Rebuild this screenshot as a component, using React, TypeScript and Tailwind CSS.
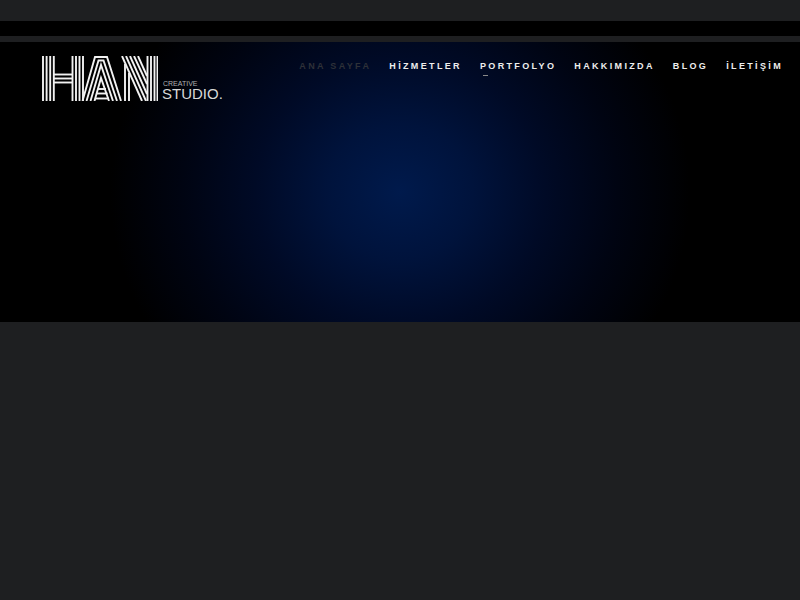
const navItems = [
  { label: "ANA SAYFA", active: true },
  { label: "HİZMETLER" },
  { label: "PORTFOLYO", marker: true },
  { label: "HAKKIMIZDA" },
  { label: "BLOG" },
  { label: "İLETİŞİM" },
];

function HanLogo() {
  const lines = [
    // H left stem
    "M1 0V45", "M4.6 0V45", "M8.2 0V45", "M11.8 0V45",
    // H bar
    "M12 18.5H31", "M12 22.5H31", "M12 26.5H31",
    // H right stem
    "M30.5 0V45", "M34 0V45", "M37.5 0V45", "M41 0V45",
    // A chevrons
    "M40.5 45L53 1H65L79 45",
    "M44.5 45L56.5 4.5H61.5L75 45",
    "M48.5 45L59 9L71 45",
    "M52.5 45L59 22L67 45",
    // A bar
    "M56 33H64", "M54.5 37.5H65.5", "M53 42.5H67",
    // N left stem
    "M83 8V45", "M87 17V45",
    // N diagonals
    "M80 0L100 45", "M84 0L104 45", "M88 0L105 38", "M92 0L105 28", "M96 0L105 20",
    // N right stem
    "M105.5 0V45", "M109 0V45", "M112.5 0V45", "M115.5 0V45",
  ];
  return (
    <svg width="116" height="45" viewBox="0 0 116 45" fill="none" stroke="#f2f2f2" strokeWidth="1.9" className="shrink-0">
      {lines.map((d) => (
        <path key={d} d={d} />
      ))}
    </svg>
  );
}

export default function App() {
  return (
    <div className="h-[600px] w-[800px] overflow-hidden bg-[#1e1f21] font-['Liberation_Sans',Arial,sans-serif]">
      <div className="h-[21px] bg-[#1e1f21]" />
      <div className="h-[15px] bg-black" />
      <div className="h-[6px] bg-[#1e1f21]" />
      <header className="flex h-[280px] items-start justify-between bg-[radial-gradient(ellipse_290px_270px_at_400px_150px,#001a4c_0%,#00133c_25%,#000a26_50%,#000412_75%,#000000_100%)] pl-[42px] pr-[17px]">
        <div className="mt-[14px] flex items-end">
          <HanLogo />
          <div className="ml-[4px] flex flex-col text-[#d8d8d8]">
            <span className="ml-px text-[7px] leading-[7px] text-[#b0b0b0]">CREATIVE</span>
            <span className="text-[15px] leading-[14px]">STUDIO.</span>
          </div>
        </div>
        <nav className="mt-[19px] flex gap-[18px]">
          {navItems.map((item) => (
            <div key={item.label} className="relative">
              <span className={`block text-[9px] leading-[10px] font-bold tracking-[2.35px] ${item.active ? "text-[#2e3138]" : "text-[#eeeeee]"}`}>
                {item.label}
              </span>
              {item.marker && <span className="absolute top-[14px] left-[3px] h-px w-[5px] bg-[#8a8a8a]" />}
            </div>
          ))}
        </nav>
      </header>
    </div>
  );
}
